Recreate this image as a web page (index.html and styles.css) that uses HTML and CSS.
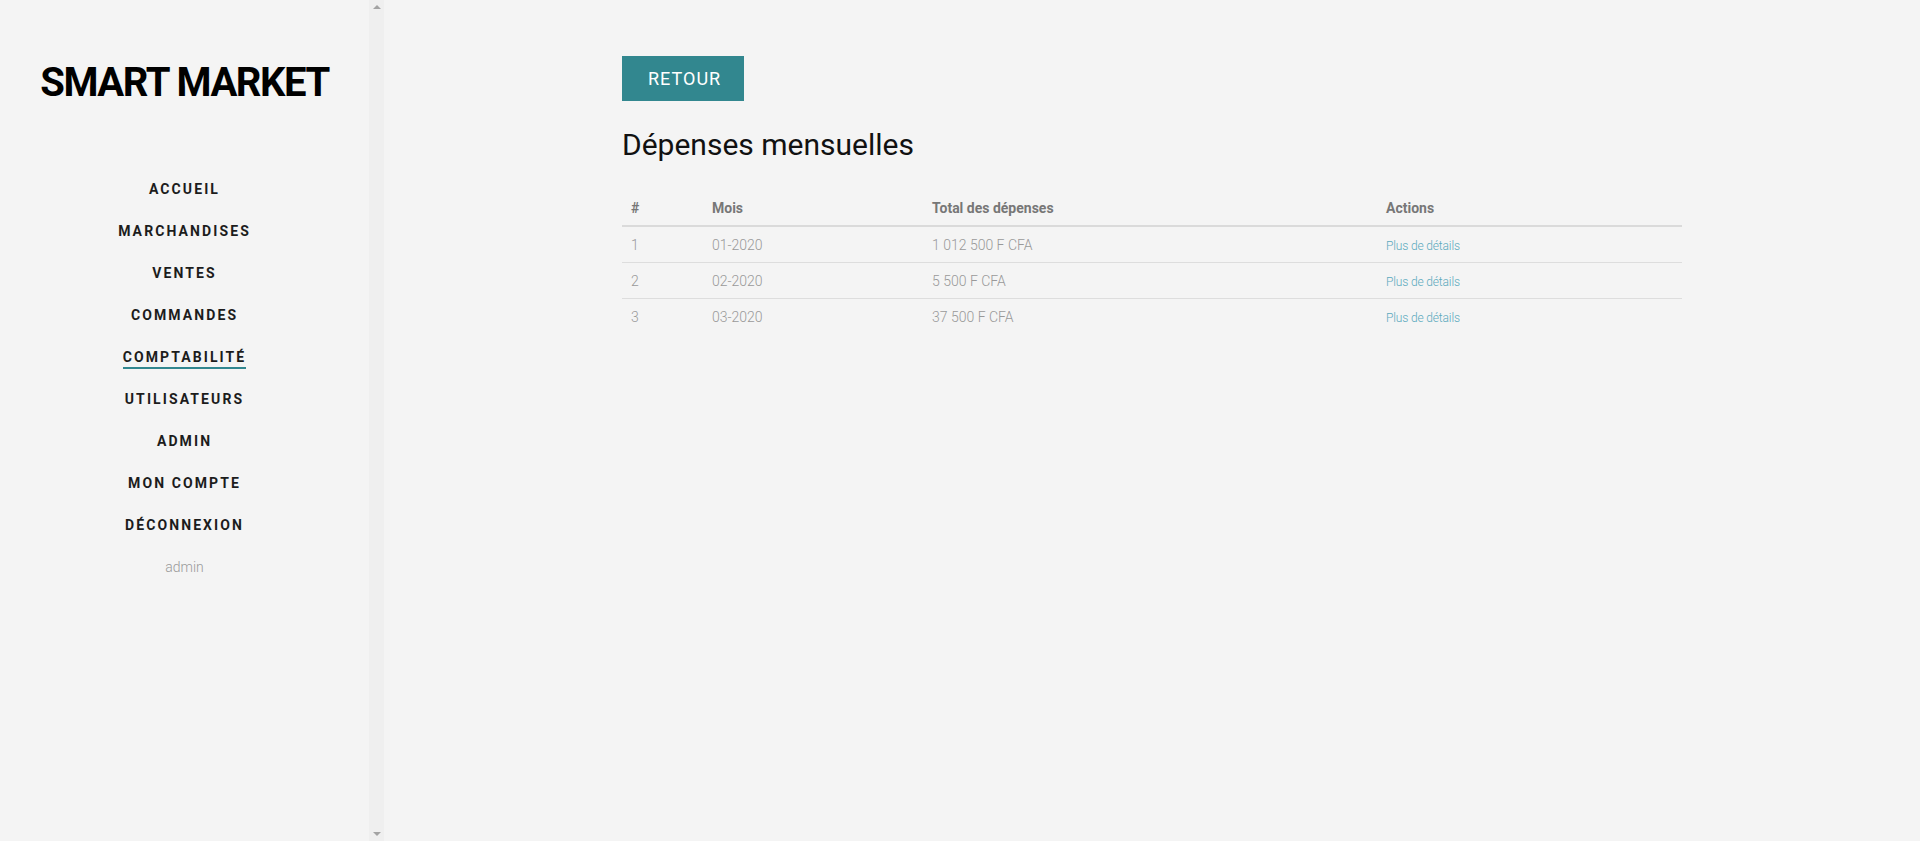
FILE: index.html
```html
<!DOCTYPE html>
<html lang="fr">
<head>
<meta charset="utf-8">
<title>Smart Market - Dépenses mensuelles</title>
<link rel="stylesheet" href="styles.css">
</head>
<body>
<div class="layout">
  <aside class="sidebar">
    <div class="sidebar-inner">
      <h1 class="logo">SMART MARKET</h1>
      <nav class="nav">
        <a class="nav-item" href="#"><span>ACCUEIL</span></a>
        <a class="nav-item" href="#"><span>MARCHANDISES</span></a>
        <a class="nav-item" href="#"><span>VENTES</span></a>
        <a class="nav-item" href="#"><span>COMMANDES</span></a>
        <a class="nav-item active" href="#"><span>COMPTABILITÉ</span></a>
        <a class="nav-item" href="#"><span>UTILISATEURS</span></a>
        <a class="nav-item" href="#"><span>ADMIN</span></a>
        <a class="nav-item" href="#"><span>MON COMPTE</span></a>
        <a class="nav-item" href="#"><span>DÉCONNEXION</span></a>
        <div class="nav-user">admin</div>
      </nav>
    </div>
    <div class="scrollbar">
      <span class="arrow arrow-up"></span>
      <span class="arrow arrow-down"></span>
    </div>
  </aside>
  <main class="main">
    <div class="content">
      <a class="btn-back" href="#">RETOUR</a>
      <h2 class="title">Dépenses mensuelles</h2>
      <table class="table">
        <colgroup>
          <col class="c1"><col class="c2"><col class="c3"><col class="c4">
        </colgroup>
        <thead>
          <tr><th>#</th><th>Mois</th><th>Total des dépenses</th><th>Actions</th></tr>
        </thead>
        <tbody>
          <tr><td>1</td><td>01-2020</td><td>1 012 500 F CFA</td><td><a class="link" href="#">Plus de détails</a></td></tr>
          <tr><td>2</td><td>02-2020</td><td>5 500 F CFA</td><td><a class="link" href="#">Plus de détails</a></td></tr>
          <tr><td>3</td><td>03-2020</td><td>37 500 F CFA</td><td><a class="link" href="#">Plus de détails</a></td></tr>
        </tbody>
      </table>
    </div>
  </main>
</div>
</body>
</html>
```
FILE: styles.css
```css
* { box-sizing: border-box; }
html, body { margin: 0; padding: 0; }
body {
  background: #f4f4f4;
  font-family: Roboto, "Liberation Sans", sans-serif;
  color: #222;
  height: 841px;
  overflow: hidden;
}
.layout {
  display: flex;
  height: 100vh;
}
.sidebar {
  width: 384px;
  flex: 0 0 384px;
  display: flex;
  background: #f4f4f4;
}
.sidebar-inner {
  flex: 1;
  display: flex;
  flex-direction: column;
  align-items: center;
}
.logo {
  margin: 59px 0 0;
  font-size: 40px;
  font-weight: 700;
  line-height: 47px;
  color: #000;
  letter-spacing: -1.45px;
}
.nav {
  margin-top: 62px;
  display: flex;
  flex-direction: column;
  align-items: center;
}
.nav-item {
  height: 42px;
  display: flex;
  align-items: center;
  justify-content: center;
  text-decoration: none;
  color: #1c1c1c;
  font-size: 14px;
  font-weight: 700;
  letter-spacing: 2.1px;
}
.nav-item span {
  display: inline-block;
  line-height: 16px;
  padding-top: 3px;
  padding-bottom: 2px;
  border-bottom: 2px solid transparent;
}
.nav-item.active span {
  border-bottom-color: #31868f;
}
.nav-user {
  height: 42px;
  display: flex;
  align-items: center;
  color: #9a9a9a;
  font-size: 14px;
  font-weight: 300;
}
.scrollbar {
  width: 15px;
  flex: 0 0 15px;
  background: #efefef;
  display: flex;
  flex-direction: column;
  justify-content: space-between;
  align-items: center;
  padding: 5px 0;
}
.arrow {
  width: 0;
  height: 0;
  border-left: 4px solid transparent;
  border-right: 4px solid transparent;
}
.arrow-up { border-bottom: 4px solid #a3a3a3; }
.arrow-down { border-top: 4px solid #a3a3a3; }
.main {
  flex: 1;
  padding: 56px 0 0 238px;
}
.content {
  width: 1060px;
}
.btn-back {
  display: inline-block;
  height: 45px;
  line-height: 45px;
  padding: 0 23px 0 26px;
  background: #32878f;
  color: #fff;
  text-decoration: none;
  font-size: 18px;
  letter-spacing: 1px;
}
.title {
  margin: 26px 0 28px;
  font-size: 30px;
  font-weight: 400;
  line-height: 35px;
  color: #111;
}
.table {
  width: 1060px;
  border-collapse: collapse;
  table-layout: fixed;
}
.c1 { width: 81px; }
.c2 { width: 220px; }
.c3 { width: 454px; }
.c4 { width: 305px; }
.table th {
  text-align: left;
  height: 36px;
  padding: 0 9px;
  font-size: 14px;
  font-weight: 700;
  color: #777;
  border-bottom: 2px solid #dadada;
  vertical-align: middle;
}
.table td {
  height: 36px;
  padding: 2px 9px 0;
  font-size: 14px;
  font-weight: 300;
  color: #999;
  border-top: 1px solid #dddddd;
  vertical-align: middle;
}
.table tbody tr:first-child td { border-top: none; }
.link {
  color: #5aa9bd;
  text-decoration: none;
  font-size: 12px;
  letter-spacing: -0.15px;
}
```
